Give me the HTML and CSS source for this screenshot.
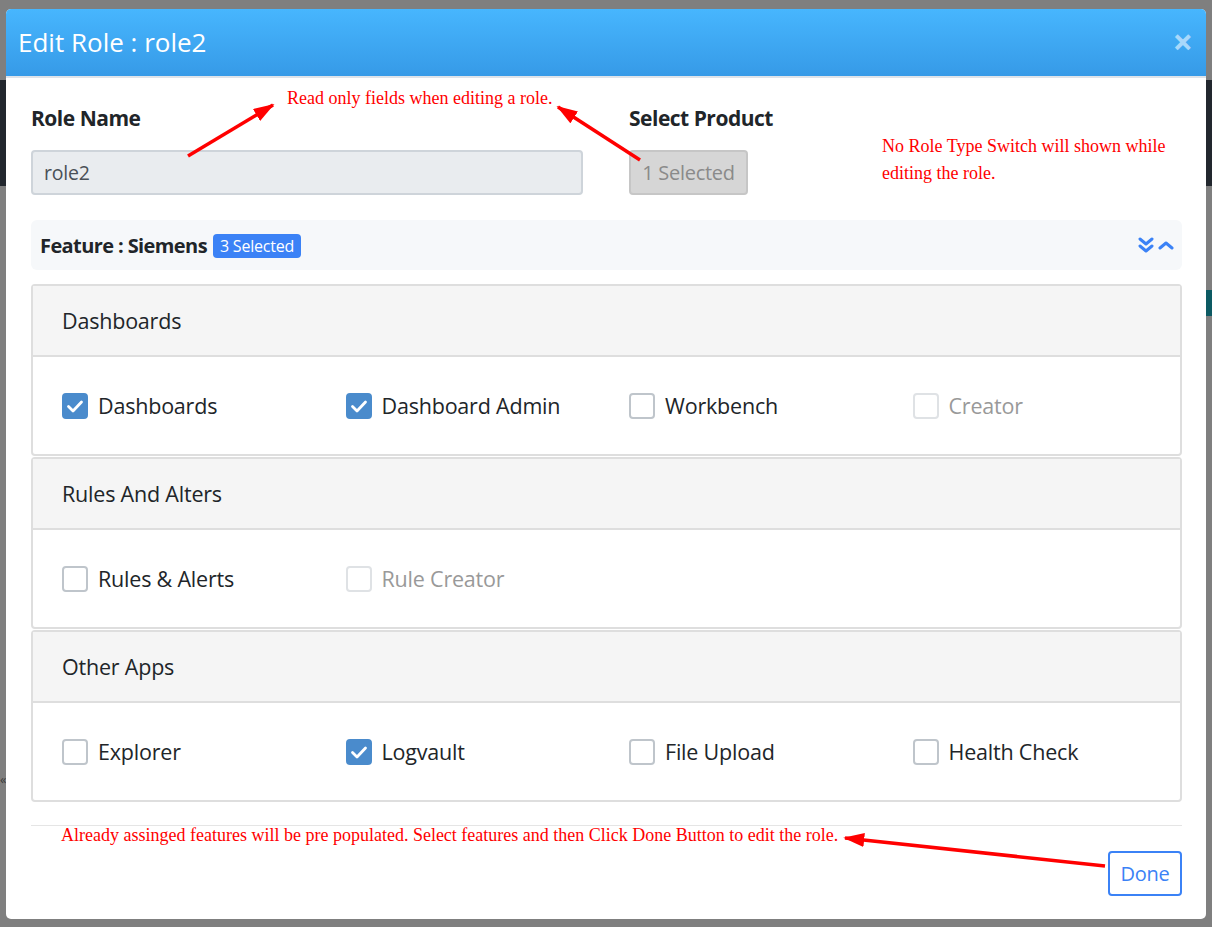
FILE: index.html
```html
<!DOCTYPE html>
<html>
<head>
<meta charset="utf-8">
<link rel="stylesheet" href="styles.css">
</head>
<body>
<div class="backdrop">
  <div class="bg-band bg-band-top"></div>
  <div class="bg-band bg-teal"></div>
  <div class="bg-guillemet">«</div>
</div>
<div class="modal">
  <div class="modal-header">
    <h1 class="modal-title">Edit Role : role2</h1>
    <span class="close">×</span>
  </div>
  <div class="modal-body">
    <div class="top-row">
      <div class="field field-name">
        <label class="field-label">Role Name</label>
        <div class="input readonly">role2</div>
      </div>
      <div class="field field-product">
        <label class="field-label">Select Product</label>
        <div class="select-btn">1 Selected</div>
      </div>
    </div>

    <div class="feature-bar">
      <span class="feature-title">Feature : Siemens</span>
      <span class="badge">3 Selected</span>
      <span class="feature-icons">
        <svg width="16" height="18" viewBox="0 0 16 18"><path d="M2 3l6 5 6-5M2 10l6 5 6-5" fill="none" stroke="#3b82f6" stroke-width="3" stroke-linecap="round" stroke-linejoin="round"/></svg>
        <svg width="16" height="12" viewBox="0 0 16 12"><path d="M2 9l6-5 6 5" fill="none" stroke="#3b82f6" stroke-width="3" stroke-linecap="round" stroke-linejoin="round"/></svg>
      </span>
    </div>

    <div class="card">
      <div class="card-header">Dashboards</div>
      <div class="card-body">
        <label class="check"><span class="box checked"><svg viewBox="0 0 22 22"><path d="M4.5 11.5l4.5 4.5 8.5-9" /></svg></span>Dashboards</label>
        <label class="check"><span class="box checked"><svg viewBox="0 0 22 22"><path d="M4.5 11.5l4.5 4.5 8.5-9" /></svg></span>Dashboard Admin</label>
        <label class="check"><span class="box"></span>Workbench</label>
        <label class="check disabled"><span class="box"></span>Creator</label>
      </div>
    </div>
    <div class="card">
      <div class="card-header">Rules And Alters</div>
      <div class="card-body">
        <label class="check"><span class="box"></span>Rules &amp; Alerts</label>
        <label class="check disabled"><span class="box"></span>Rule Creator</label>
      </div>
    </div>
    <div class="card">
      <div class="card-header">Other Apps</div>
      <div class="card-body">
        <label class="check"><span class="box"></span>Explorer</label>
        <label class="check"><span class="box checked"><svg viewBox="0 0 22 22"><path d="M4.5 11.5l4.5 4.5 8.5-9" /></svg></span>Logvault</label>
        <label class="check"><span class="box"></span>File Upload</label>
        <label class="check"><span class="box"></span>Health Check</label>
      </div>
    </div>
  </div>
  <div class="modal-footer">
    <button class="done">Done</button>
  </div>

  <div class="note note-readonly">Read only fields when editing a role.</div>
  <div class="note note-switch">No Role Type Switch will shown while<br>editing the role.</div>
  <div class="note note-footer">Already assinged features will be pre populated. Select features and then Click Done Button to edit the role.</div>
  <svg class="arrows" width="1200" height="910" viewBox="0 0 1200 910">
    <defs>
      <marker id="ah" markerWidth="6" markerHeight="4" refX="5.5" refY="2" orient="auto" markerUnits="strokeWidth">
        <path d="M0 0L6 2L0 4z" fill="#ff0000"/>
      </marker>
    </defs>
    <line x1="182" y1="147" x2="267" y2="96" stroke="#ff0000" stroke-width="3.5" marker-end="url(#ah)"/>
    <line x1="634" y1="151" x2="552" y2="98" stroke="#ff0000" stroke-width="3.5" marker-end="url(#ah)"/>
    <line x1="1099" y1="857" x2="839" y2="829" stroke="#ff0000" stroke-width="3.5" marker-end="url(#ah)"/>
  </svg>
</div>
</body>
</html>
```
FILE: styles.css
```css
* { box-sizing: border-box; }
html, body { margin: 0; padding: 0; }
body {
  width: 1212px;
  height: 927px;
  background: #7f7f7f;
  font-family: "Open Sans", "Noto Sans", sans-serif;
  color: #212529;
  overflow: hidden;
  position: relative;
}
.backdrop { position: absolute; inset: 0; }
.bg-band { position: absolute; }
.bg-band-top { left: 0; right: 0; top: 80px; height: 106px; background: #22272e; }
.bg-teal { right: 0; top: 290px; width: 6px; height: 26px; background: #0d5a63; }
.bg-guillemet { position: absolute; left: 0; top: 770px; font-size: 13px; color: #3a3a3a; }

.modal {
  position: relative;
  margin: 9px 6px 0 6px;
  width: 1200px;
  height: 910px;
  background: #fff;
  border-radius: 5px;
  display: flex;
  flex-direction: column;
}
.modal-header {
  height: 69px;
  background: linear-gradient(#47b6fe, #369ae7);
  border-bottom: 2px solid #dde3ea;
  border-radius: 5px 5px 0 0;
  display: flex;
  align-items: center;
  padding: 0 13px 0 12px;
}
.modal-title {
  margin: 0;
  flex: 1;
  font-weight: 400;
  font-size: 26px;
  color: #fff;
  letter-spacing: 0;
  padding-bottom: 2px;
}
.close {
  color: #a9d8fb;
  font-size: 36px;
  font-weight: 700;
  line-height: 1;
  margin-top: -2px;
}

.modal-body { padding: 26px 24px 0 25px; }
.top-row { display: flex; gap: 46px; }
.field { display: flex; flex-direction: column; }
.field-name { width: 552px; }
.field-label {
  font-weight: 700;
  font-size: 21px;
  letter-spacing: -0.5px;
  color: #212529;
  line-height: 28px;
  margin-bottom: 18px;
}
.input {
  height: 45px;
  border: 2px solid #ced4da;
  border-radius: 4px;
  background: #e9ecef;
  color: #495057;
  font-size: 19.5px;
  display: flex;
  align-items: center;
  padding: 0 11px;
  letter-spacing: -0.2px;
}
.select-btn {
  width: 119px;
  height: 45px;
  border: 2px solid #c6c6c6;
  border-radius: 4px;
  background: #d6d6d6;
  color: #8a8a8a;
  font-size: 20px;
  display: flex;
  align-items: center;
  justify-content: center;
  letter-spacing: -0.3px;
}

.feature-bar {
  margin-top: 25px;
  height: 50px;
  background: #f6f8fa;
  border-radius: 6px;
  display: flex;
  align-items: center;
  padding: 0 8px 0 9px;
}
.feature-title {
  font-weight: 700;
  font-size: 20px;
  letter-spacing: -0.6px;
  color: #212529;
}
.badge {
  margin-left: 6px;
  background: #3b82f6;
  color: #fff;
  font-size: 16px;
  border-radius: 4px;
  padding: 2px 7px 2px;
  line-height: 20px;
  letter-spacing: -0.2px;
  margin-top: 2px;
}
.feature-icons { margin-left: auto; display: flex; align-items: center; gap: 4px; }

.card {
  border: 2px solid #dedede;
  border-radius: 4px;
  margin-top: 1px;
}
.feature-bar + .card { margin-top: 14px; }
.card-header {
  height: 71px;
  background: #f5f5f5;
  border-bottom: 2px solid #dedede;
  display: flex;
  align-items: center;
  padding-left: 29px;
  font-size: 21.5px;
  color: #212529;
  letter-spacing: -0.2px;
}
.card-body {
  height: 97px;
  display: grid;
  grid-template-columns: repeat(4, 283.5px);
  align-items: center;
  padding-left: 29px;
}
.check {
  display: flex;
  align-items: center;
  gap: 10px;
  font-size: 21.5px;
  color: #212529;
  letter-spacing: -0.2px;
}
.check.disabled { color: #999; }
.box {
  width: 26px;
  height: 26px;
  border: 2px solid #bfc5cb;
  border-radius: 4px;
  background: #fff;
  flex: none;
  display: flex;
}
.check.disabled .box { border-color: #dfe2e5; }
.box.checked {
  background: #4a8bcc;
  border-color: #4a8bcc;
}
.box svg { width: 22px; height: 22px; }
.box svg path { fill: none; stroke: #fff; stroke-width: 2.8; stroke-linecap: round; stroke-linejoin: round; }

.modal-footer {
  margin: 23px 24px 0 25px;
  border-top: 1px solid #e5e5e5;
  display: flex;
  justify-content: flex-end;
  padding-top: 25px;
}
.done {
  width: 74px;
  height: 45px;
  border: 2px solid #3b82f6;
  border-radius: 4px;
  background: #fff;
  color: #3b82f6;
  font-family: inherit;
  font-size: 20px;
  letter-spacing: -0.3px;
  padding: 0;
  margin-right: 0;
}

.note {
  position: absolute;
  color: #ff0000;
  font-family: "Liberation Serif", serif;
  font-size: 18px;
}
.note-readonly { left: 281px; top: 79px; }
.note-switch { left: 876px; top: 124px; line-height: 27px; }
.note-footer { left: 55px; top: 816px; }
.arrows { position: absolute; left: 0; top: 0; pointer-events: none; }
```
